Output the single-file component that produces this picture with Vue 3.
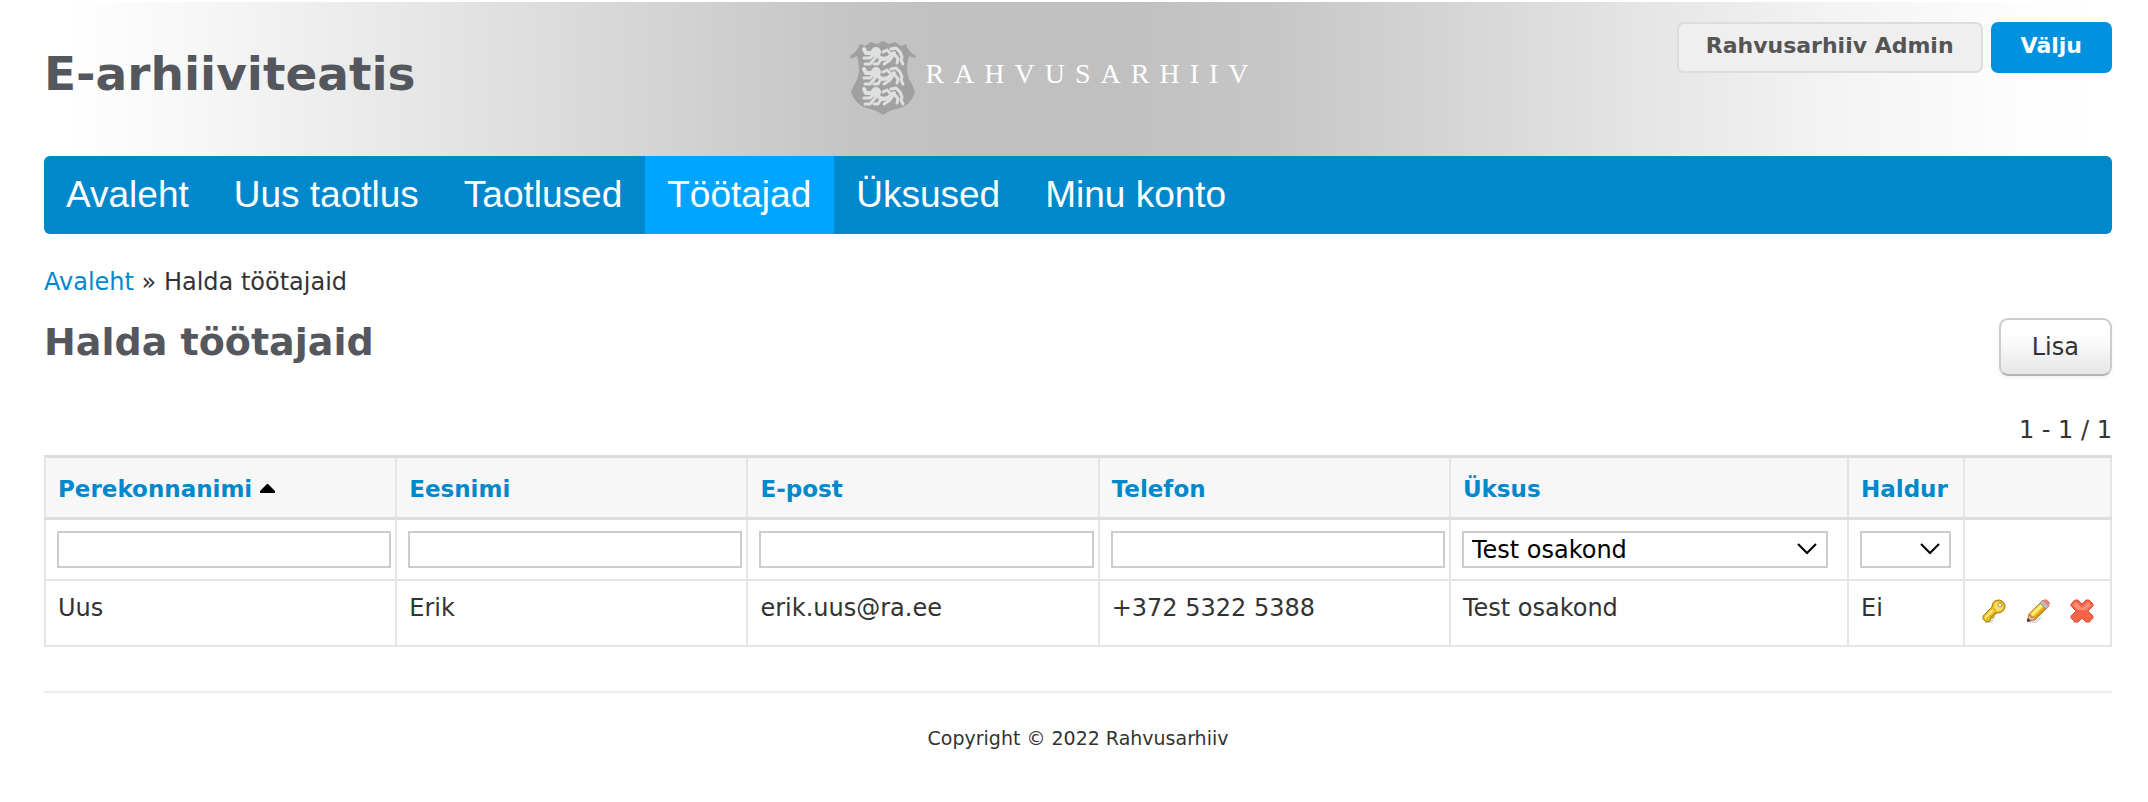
<script setup>
import { ref } from 'vue'

const navItems = [
  { label: 'Avaleht' },
  { label: 'Uus taotlus' },
  { label: 'Taotlused' },
  { label: 'Töötajad', active: true },
  { label: 'Üksused' },
  { label: 'Minu konto' },
]

const textColumns = [
  { key: 'lastName', label: 'Perekonnanimi', sorted: true },
  { key: 'firstName', label: 'Eesnimi' },
  { key: 'email', label: 'E-post' },
  { key: 'phone', label: 'Telefon' },
]

const filters = ref({ lastName: '', firstName: '', email: '', phone: '', unit: 'Test osakond', manager: '' })

const rows = [
  { lastName: 'Uus', firstName: 'Erik', email: 'erik.uus@ra.ee', phone: '+372 5322 5388', unit: 'Test osakond', manager: 'Ei' },
]
</script>

<template>
  <div class="page">
    <header class="header">
      <h1 class="title">E-arhiiviteatis</h1>
      <div class="brand">
        <svg class="shield" viewBox="0 0 68 74" aria-hidden="true">
          <defs>
            <g id="lion">
              <circle cx="27" cy="5" r="4" stroke-width="2" fill="#dedfdf" />
              <path d="M15 2L17 6H23M26 8L34 12L39 11L45 6" stroke-width="4" />
              <path d="M15 11H21L24 8M16 17H21L26 11M32 12L29 17H25" stroke-width="3" />
              <path d="M45 7L41 13L35 17M46 8L49 12L48 16M34 5L38 3L41 6" stroke-width="3" />
              <path d="M42 2L47 1L51 5L53 10L52 13L54 17" stroke-width="3" />
            </g>
          </defs>
          <path fill="#a0a0a0" d="M1 15 Q9 10 11 3 L16 5 L22 1 L28 3 L34 0 L40 3 L46 1 L52 5 L57 3 Q59 11 67 15 L66 17 L60 15 Q55 33 63 43 L66 51 Q62 64 51 67 Q40 69 34 74 Q28 69 17 67 Q6 63 2 51 L5 44 Q13 33 8 15 L2 18 Z" />
          <g fill="none" stroke="#dedfdf" stroke-linejoin="round" stroke-linecap="round">
            <use href="#lion" y="6" />
            <use href="#lion" y="26" />
            <use href="#lion" y="46" />
          </g>
        </svg>
        <span class="wordmark">RAHVUSARHIIV</span>
      </div>
      <div class="account">
        <a class="pill user" href="#">Rahvusarhiiv Admin</a>
        <a class="pill logout" href="#">Välju</a>
      </div>
    </header>

    <nav class="nav">
      <a v-for="item in navItems" :key="item.label" href="#" :class="['nav-item', { active: item.active }]">{{ item.label }}</a>
    </nav>

    <main class="content">
      <div class="crumbs"><a href="#">Avaleht</a> » Halda töötajaid</div>
      <div class="heading">
        <h2>Halda töötajaid</h2>
        <button type="button" class="add">Lisa</button>
      </div>
      <div class="summary">1 - 1 / 1</div>

      <table class="grid">
        <colgroup>
          <col v-for="c in textColumns" :key="c.key" class="col-text" />
          <col />
          <col class="col-manager" />
          <col class="col-actions" />
        </colgroup>
        <thead>
          <tr>
            <th v-for="c in textColumns" :key="c.key">
              <a href="#">{{ c.label }}</a>
              <svg v-if="c.sorted" class="sort" viewBox="0 0 15 9" aria-hidden="true"><path d="M0 9V7L6 1L7 0H8L9 1L15 7V9Z" /></svg>
            </th>
            <th><a href="#">Üksus</a></th>
            <th><a href="#">Haldur</a></th>
            <th></th>
          </tr>
        </thead>
        <tbody>
          <tr class="filters">
            <td v-for="c in textColumns" :key="c.key">
              <input v-model="filters[c.key]" type="text" :aria-label="c.label" />
            </td>
            <td>
              <div class="select unit">
                <select v-model="filters.unit" aria-label="Üksus">
                  <option>Test osakond</option>
                </select>
                <svg viewBox="0 0 20 12" aria-hidden="true"><path d="M1 1L10 10L19 1" /></svg>
              </div>
            </td>
            <td>
              <div class="select">
                <select v-model="filters.manager" aria-label="Haldur">
                  <option value=""></option>
                </select>
                <svg viewBox="0 0 20 12" aria-hidden="true"><path d="M1 1L10 10L19 1" /></svg>
              </div>
            </td>
            <td></td>
          </tr>
          <tr v-for="r in rows" :key="r.email" class="data">
            <td v-for="c in textColumns" :key="c.key">{{ r[c.key] }}</td>
            <td>{{ r.unit }}</td>
            <td>{{ r.manager }}</td>
            <td>
              <div class="actions">
                <a href="#" aria-label="Parool">
                  <svg viewBox="0 0 24 24">
                    <path d="M3 23h6l3-4" fill="none" stroke="#d8d8d8" stroke-width="2" />
                    <path d="M10 8 Q10 1 17 1 Q23 2 23 8 Q22 14 15 14 L12 16 L12 18 L9 19 L8 22 L4 23 L1 20 L1 17 Z" fill="#e6bd22" stroke="#a87c12" stroke-width="1" />
                    <path d="M12 8 Q12 3 17 3 Q21 4 21 8 Q20 12 15 12 Z" fill="#f8e16e" />
                    <path d="M11 11L3 19" stroke="#fbea8c" stroke-width="2" />
                    <path d="M14 13L8 19" stroke="#b98d10" stroke-width="1" />
                    <circle cx="18" cy="6" r="2" fill="#fff" stroke="#b88c1a" stroke-width="1" />
                  </svg>
                </a>
                <a href="#" aria-label="Muuda">
                  <svg viewBox="0 0 24 24">
                    <path d="M3 23h7l5-5" fill="none" stroke="#dcdcdc" stroke-width="2" />
                    <path d="M3 15L15 3L21 9L9 21Z" fill="#edc22c" stroke="#b68a2a" stroke-width="1" />
                    <path d="M5 15L16 4L18 6L7 17Z" fill="#fff07a" />
                    <path d="M8 20L20 8" stroke="#d59a13" stroke-width="2" />
                    <path d="M3 15L1 22L9 21L8 18L5 18Z" fill="#e9b48e" stroke="#bd7c58" stroke-width="1" />
                    <path d="M2 19L1 23L5 22Z" fill="#34384c" />
                    <path d="M14 4L17 1L23 7L20 10Z" fill="#b9bec6" stroke="#8b9099" stroke-width="1" />
                    <path d="M17 2L19 0Q24 2 24 5L22 7Z" fill="#ec8070" />
                  </svg>
                </a>
                <a href="#" aria-label="Kustuta">
                  <svg viewBox="0 0 24 24">
                    <path d="M3 23h5l3-3h3l3 3h4" fill="none" stroke="#dedede" stroke-width="2" />
                    <path d="M5 1H8L12 5L16 1H19L23 5V7L18 12L23 17V19L19 23H16L12 19L8 23H5L1 19V17L6 12L1 7V5Z" fill="#f5644a" stroke="#e0503b" stroke-width="1" stroke-linejoin="round" />
                    <path d="M3 6L6 3L12 9L18 3L21 6L16 11H8Z" fill="#fa8d78" />
                  </svg>
                </a>
              </div>
            </td>
          </tr>
        </tbody>
      </table>
    </main>

    <footer class="footer">Copyright © 2022 Rahvusarhiiv</footer>
  </div>
</template>

<style>
body {
  margin: 0;
  background: #fff;
}
</style>

<style scoped>
.page {
  box-sizing: border-box;
  padding: 2px 36px 0 44px;
  font-family: Verdana, "DejaVu Sans", sans-serif;
  font-size: 24px;
  line-height: 32px;
  color: #333;
}

a {
  color: #0088cc;
  text-decoration: none;
}

.header {
  display: grid;
  grid-template-columns: 1fr auto 1fr;
  min-height: 154px;
  margin: 0 -36px 0 -44px;
  padding: 0 36px 0 44px;
  box-sizing: border-box;
  background: linear-gradient(to right, #fff 3%, #f7f7f7 9%, #ececec 16%, #dfdfdf 24%, #d0d0d0 33%, #c4c4c4 40%, #c0c0c0 45%, #c0c0c0 52%, #c6c6c6 59%, #d6d6d6 68%, #e6e6e6 77%, #f3f3f3 85%, #fdfdfd 94%, #fff 98%);
}

.title {
  margin: 44px 0 0;
  font-size: 47px;
  line-height: 56px;
  color: #54575d;
}

.brand {
  display: flex;
  align-items: flex-start;
  gap: 8px;
  padding: 39px 48px 0 0;
}

.shield {
  width: 68px;
  height: 74px;
}

.wordmark {
  margin-top: 15px;
  font-family: "Liberation Serif", serif;
  font-size: 28px;
  line-height: 36px;
  letter-spacing: 10px;
  color: #fff;
}

.account {
  display: flex;
  justify-content: flex-end;
  align-items: flex-start;
  gap: 8px;
  padding-top: 20px;
}

.pill {
  box-sizing: border-box;
  height: 51px;
  padding: 6px 27px;
  border: 2px solid #ddd;
  border-radius: 7px;
  background: #efefef;
  color: #555;
  font-size: 22px;
  font-weight: bold;
  white-space: nowrap;
}

.logout {
  padding: 6px 28px;
  border-color: #0092df;
  background: #0092df;
  color: #fff;
}

.nav {
  display: flex;
  overflow: hidden;
  border-radius: 6px;
  background: #0088cc;
}

.nav-item {
  padding: 0 23px 0 22px;
  font-family: "Liberation Sans", Arial, sans-serif;
  font-size: 37px;
  line-height: 78px;
  color: #fff;
}

.nav-item.active {
  background: #00a5ff;
}

.content {
  padding-top: 32px;
}

.heading {
  display: flex;
  justify-content: space-between;
  align-items: flex-start;
  margin-top: 20px;
}

h2 {
  margin: 0;
  font-size: 38px;
  line-height: 48px;
  color: #54575d;
}

.add {
  box-sizing: border-box;
  height: 58px;
  padding: 0 31px;
  border: 2px solid #ccc;
  border-bottom-color: #b3b3b3;
  border-radius: 9px;
  background: linear-gradient(#fff 25%, #e6e6e6);
  box-shadow: 0 2px 4px rgba(0, 0, 0, 0.06);
  font: inherit;
  color: #333;
}

.summary {
  margin-top: 38px;
  text-align: right;
}

.grid {
  width: 100%;
  margin-top: 9px;
  border-collapse: collapse;
  table-layout: fixed;
}

.col-text {
  width: 17%;
}

.col-manager {
  width: 116px;
}

.col-actions {
  width: 147px;
}

th,
td {
  padding: 11px 0 12px 12px;
  border: 2px solid #e5e5e5;
  text-align: left;
  vertical-align: top;
}

th {
  padding: 12px 0 9px 12px;
  border-top: 3px solid #ddd;
  border-bottom: 3px solid #ddd;
  background: #f7f7f7;
  font-size: 23px;
  line-height: 38px;
  white-space: nowrap;
}

.sort {
  width: 15px;
  height: 9px;
  margin: 0 0 4px 8px;
}

.filters td {
  padding: 11px 4px 11px 11px;
}

input,
select {
  display: block;
  box-sizing: border-box;
  width: 100%;
  height: 37px;
  margin: 0;
  border: 2px solid #ccc;
  border-radius: 0;
  background: #fff;
  font: inherit;
  color: #000;
}

select {
  padding: 0 8px;
  appearance: none;
}

.select {
  position: relative;
  margin-right: 8px;
}

.select.unit {
  margin-right: 15px;
}

.select svg {
  position: absolute;
  top: 12px;
  right: 11px;
  width: 20px;
  height: 12px;
  fill: none;
  stroke: #000;
  stroke-width: 2;
  pointer-events: none;
}

.data td {
  height: 41px;
}

.actions {
  display: flex;
  gap: 20px;
  padding: 7px 0 0 5px;
}

.actions a,
.actions svg {
  display: block;
  width: 24px;
  height: 24px;
}

.footer {
  margin-top: 44px;
  padding: 29px 0;
  border-top: 2px solid #eee;
  font-size: 19px;
  text-align: center;
}
</style>
